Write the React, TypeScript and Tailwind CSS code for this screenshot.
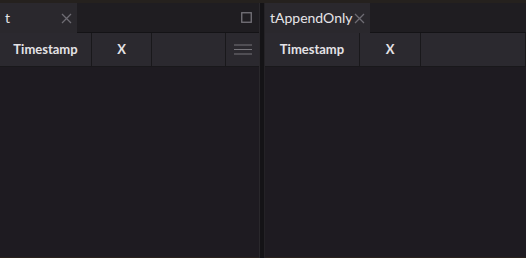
import React from "react";

function CloseIcon() {
  return (
    <svg width="11" height="11" viewBox="0 0 11 11" className="shrink-0">
      <path d="M1 1 L10 10 M10 1 L1 10" stroke="#6e6c73" strokeWidth="1.3" />
    </svg>
  );
}

function MaxIcon() {
  return (
    <svg width="11" height="11" viewBox="0 0 11 11">
      <rect x="0.75" y="0.75" width="9.5" height="9.5" fill="none" stroke="#76747a" strokeWidth="1.3" />
    </svg>
  );
}

function MenuIcon() {
  return (
    <svg width="18" height="11" viewBox="0 0 18 11">
      <path d="M0 1 H18 M0 5.5 H18 M0 10 H18" stroke="#77757b" strokeWidth="1.2" />
    </svg>
  );
}

function Panel({
  title,
  tabWidth,
  cols,
  showControls,
}: {
  title: string;
  tabWidth: string;
  cols: { label: string; width: string }[];
  showControls?: boolean;
}) {
  return (
    <div className="flex flex-col flex-1 min-w-0 h-full">
      {/* Tab bar */}
      <div className="flex h-[30px] shrink-0 bg-[#1f1d21]">
        <div className={`flex items-center justify-between pl-[5px] pr-[5px] bg-[#2a282d] ${tabWidth}`}>
          <span className="text-[14px] text-[#e6e4e8] leading-none">{title}</span>
          <CloseIcon />
        </div>
        <div className="flex-1 flex items-center justify-end pr-[7px] border-b border-[#141316]">
          {showControls && <MaxIcon />}
        </div>
      </div>
      {/* Header row */}
      <div className="flex h-[34px] shrink-0 bg-[#2b292f] border-b border-[#19181b]">
        {cols.map((c) => (
          <div
            key={c.label}
            className={`flex items-center justify-center border-r border-[#19181b] font-bold text-[13px] text-[#e4e2e6] ${c.width}`}
          >
            {c.label}
          </div>
        ))}
        <div className="flex-1 border-r border-[#19181b]" />
        {showControls && (
          <div className="w-[33px] flex items-center justify-center">
            <MenuIcon />
          </div>
        )}
      </div>
      {/* Body */}
      <div className="flex-1 bg-[#1e1b21] border-b border-[#2a221d]" />
    </div>
  );
}

export default function App() {
  return (
    <div
      className="w-[526px] h-[258px] flex flex-col bg-[#141316] overflow-hidden"
      style={{ fontFamily: "Lato, 'Open Sans', sans-serif" }}
    >
      <div className="h-[3px] bg-[#25211e] shrink-0" />
      <div className="flex flex-1 gap-[4px] min-h-0">
        <div className="w-[260px] h-full flex border-r border-[#2a282c]">
          <Panel
            title="t"
            tabWidth="w-[77px]"
            showControls
            cols={[
              { label: "Timestamp", width: "w-[92px]" },
              { label: "X", width: "w-[60px]" },
            ]}
          />
        </div>
        <div className="flex-1 h-full flex border-l border-[#242226]">
          <Panel
            title="tAppendOnly"
            tabWidth="w-[105px]"
            cols={[
              { label: "Timestamp", width: "w-[95px]" },
              { label: "X", width: "w-[61px]" },
            ]}
          />
        </div>
      </div>
    </div>
  );
}
